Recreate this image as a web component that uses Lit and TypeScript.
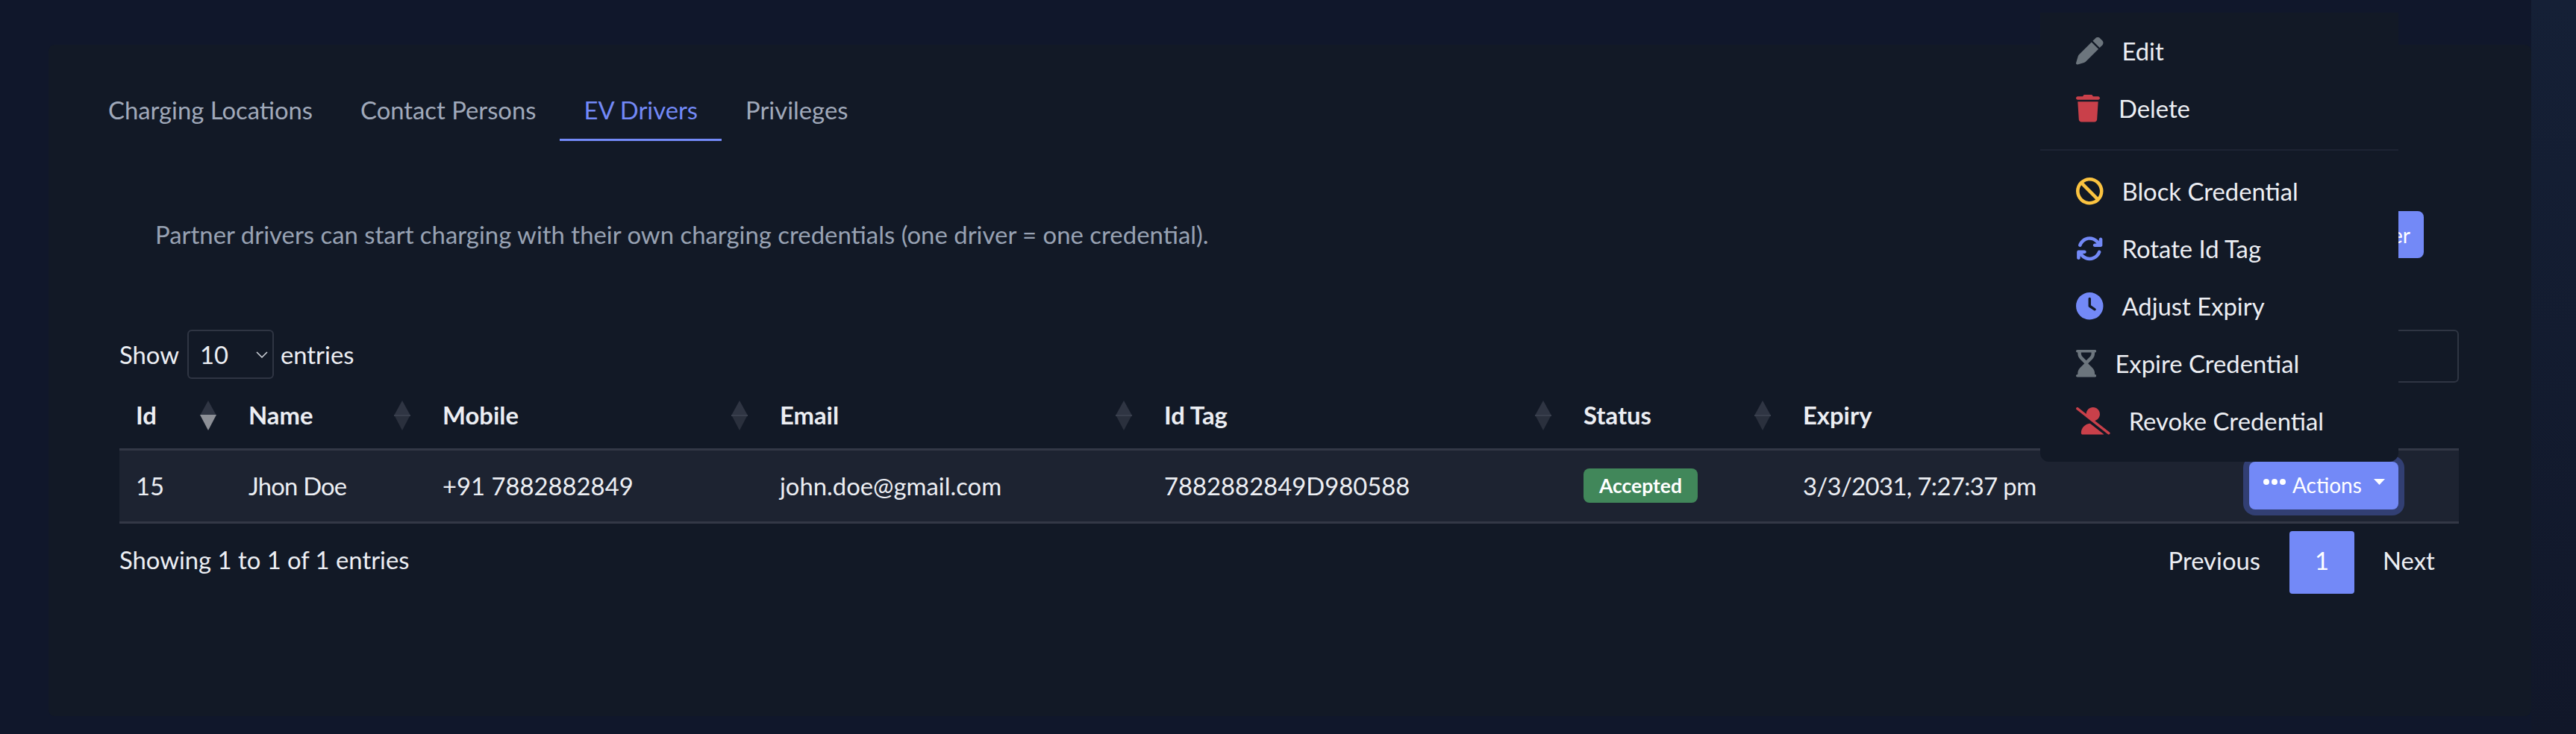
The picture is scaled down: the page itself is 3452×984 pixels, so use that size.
import { LitElement, html, css, svg } from "lit";
import { customElement } from "lit/decorators.js";

const PEN = "M362.7 19.3L314.3 67.7 444.3 197.7l48.4-48.4c25-25 25-65.5 0-90.5L453.3 19.3c-25-25-65.5-25-90.5 0zm-71 71L58.6 323.5c-10.4 10.4-18 23.3-22.2 37.4L1 481.2C-1.5 489.7 .8 498.8 7 505s15.3 8.5 23.7 6.1l120.3-35.4c14.1-4.2 27-11.8 37.4-22.2L421.7 220.3 291.7 90.3z";
const TRASH = "M135.2 17.7L128 32H32C14.3 32 0 46.3 0 64S14.3 96 32 96H416c17.7 0 32-14.3 32-32s-14.3-32-32-32H320l-7.2-14.3C307.4 6.8 296.3 0 284.2 0H163.8c-12.1 0-23.2 6.8-28.6 17.7zM416 128H32L53.2 467c1.6 25.3 22.6 45 47.9 45H346.9c25.3 0 46.3-19.7 47.9-45L416 128z";
const BAN = "M367.2 412.5L99.5 144.8C77.1 176.1 64 214.5 64 256c0 106 86 192 192 192c41.5 0 79.9-13.1 111.2-35.5zm45.3-45.3C434.9 335.9 448 297.5 448 256c0-106-86-192-192-192c-41.5 0-79.9 13.1-111.2 35.5L412.5 367.2zM0 256a256 256 0 1 1 512 0A256 256 0 1 1 0 256z";
const SYNC = "M105.1 202.6c7.7-21.8 20.2-42.3 37.8-59.8c62.5-62.5 163.8-62.5 226.3 0L386.3 160H352c-17.7 0-32 14.3-32 32s14.3 32 32 32H463.5c0 0 0 0 0 0h.4c17.7 0 32-14.3 32-32V80c0-17.7-14.3-32-32-32s-32 14.3-32 32v35.2L414.4 97.6c-87.5-87.5-229.3-87.5-316.8 0C73.2 122 55.6 150.7 44.8 181.4c-5.9 16.7 2.9 34.9 19.5 40.8s34.9-2.9 40.8-19.5zM39 289.3c-5 1.5-9.8 4.2-13.7 8.2c-4 4-6.7 8.8-8.1 14c-.3 1.2-.6 2.5-.8 3.8c-.3 1.7-.4 3.4-.4 5.1V432c0 17.7 14.3 32 32 32s32-14.3 32-32V396.9l17.6 17.5 0 0c87.5 87.4 229.3 87.4 316.7 0c24.4-24.4 42.1-53.1 52.9-83.7c5.9-16.7-2.9-34.9-19.5-40.8s-34.9 2.9-40.8 19.5c-7.7 21.8-20.2 42.3-37.8 59.8c-62.5 62.5-163.8 62.5-226.3 0l-.1-.1L125.6 352H160c17.7 0 32-14.3 32-32s-14.3-32-32-32H48.4c-1.6 0-3.2 .1-4.8 .3s-3.1 .5-4.6 1z";
const CLOCK = "M256 0a256 256 0 1 1 0 512A256 256 0 1 1 256 0zM232 120V256c0 8 4 15.5 10.7 20l96 64c11 7.4 25.9 4.4 33.3-6.7s4.4-25.9-6.7-33.3L280 243.2V120c0-13.3-10.7-24-24-24s-24 10.7-24 24z";
const HOURGLASS = "M0 24C0 10.7 10.7 0 24 0H360c13.3 0 24 10.7 24 24s-10.7 24-24 24h-8V67c0 40-16 79-44.500 107.500L226 256l81.500 81.500C336 366 352 405 352 445v19h8c13.300 0 24 10.700 24 24s-10.700 24-24 24H24c-13.300 0-24-10.700-24-24s10.700-24 24-24h8V445c0-40 16-79 44.500-107.500L158 256 76.500 174.500C48 146 32 107 32 67V48H24C10.700 48 0 37.300 0 24zM96 48V67c0 23 9 45 26 62l70 70 70-70c17-17 26-39 26-62V48z";
const USER_SLASH = "M38.800 5.100C28.400-3.100 13.300-1.200 5.100 9.200S-1.200 34.700 9.200 42.900l592 464c10.400 8.200 25.500 6.300 33.700-4.100s6.300-25.500-4.100-33.700L353.300 251.600C407.900 237 448 187.200 448 128C448 57.300 390.700 0 320 0C250.200 0 193.500 55.800 192 125.200L38.800 5.100zM264.300 304.300C170.500 309.400 96 387.200 96 482.300c0 16.400 13.300 29.700 29.700 29.700H514.300c3.900 0 7.600-.7 11-2.100l-261-205.600z";

const icon = (d: string, w: number, color: string, vb = 512) =>
  html`<svg class="ico" style="width:${(w / 512) * 36.5}px;color:${color}" viewBox="0 0 ${w} ${vb}"><path fill="currentColor" fill-rule="evenodd" d=${d}></path></svg>`;

const COLS = [
  { t: "Id", w: 151, v: "15", active: true },
  { t: "Name", w: 260, v: "Jhon Doe", c: "name" },
  { t: "Mobile", w: 452, v: "+91 7882882849" },
  { t: "Email", w: 515, v: "john.doe@gmail.com" },
  { t: "Id Tag", w: 562, v: "7882882849D980588" },
  { t: "Status", w: 294, v: "" },
  { t: "Expiry", w: 596, v: "3/3/2031, 7:27:37 pm", nosort: true },
  { t: "", w: 305, v: "", nosort: true },
];

@customElement("app-root")
export class AppRoot extends LitElement {
  static styles = css`
    :host { display: block; height: 984px; overflow: hidden; background: linear-gradient(180deg, #152036, #111729) right top / 60px 100% no-repeat, #10172b; font-family: "Lato", "Noto Sans", sans-serif; font-size: 32.8px; color: #eceef3; }
    * { box-sizing: border-box; }
    .page { padding: 60px 60px 0 65px; }
    .card { height: 900px; background: #121926; padding: 66px 97px 0 95px; border-radius: 8px; }
    .tabs { display: flex; margin-left: -47px; }
    .tab { padding: 0 32px 16px; line-height: 44px; height: 63px; color: #a0a9ba; border-bottom: 3px solid transparent; }
    .tab.on { color: #7389f7; border-bottom-color: #7389f7; }
    .notice { display: flex; justify-content: space-between; align-items: center; margin: 94px 47px 0 48px; height: 63px; }
    .notice p { margin: 0 0 1px; font-size: 32.9px; color: #98a2b3; }
    .add { height: 63px; padding: 0 18px 0 40px; display: flex; align-items: center; background: #7389f7; color: #fff; border-radius: 8px; font-size: 28px; }
    .ctl { display: flex; justify-content: space-between; align-items: flex-start; margin-top: 96px; height: 71px; }
    .len { display: flex; align-items: center; gap: 9px; height: 66px; }
    .sel { width: 116px; height: 66px; margin-left: 2px; border: 2px solid #2f3543; border-radius: 6px; display: flex; align-items: center; justify-content: space-between; padding: 0 6px 0 15px; }
    .sel svg { width: 16px; height: 9px; }
    .search { width: 320px; height: 71px; border: 2px solid #2f3543; border-radius: 6px; }
    table { width: 3135px; table-layout: fixed; border-collapse: collapse; }
    th { height: 89px; padding: 0 21px 0 22px; font-weight: 700; text-align: left; }
    .th { display: flex; justify-content: space-between; align-items: center; }
    .sort { width: 22px; height: 40px; flex: none; }
    td { padding: 0 0 0 22px; height: 98px; background: #1d2331; border-top: 3px solid #333846; border-bottom: 3px solid #333846; box-shadow: 0 2px 0 #0e131f; }
    td.name { letter-spacing: -0.8px; }
    td.expiry { letter-spacing: -0.62px; }
    .badge { display: inline-flex; align-items: center; justify-content: center; width: 153px; height: 46px; background: #41875a; border-radius: 8px; color: #fff; font-weight: 700; font-size: 26.5px; }
    .wrap { position: relative; width: 200px; margin-left: 2px; }
    .btn { height: 64px; background: #7389f7; border-radius: 8px; box-shadow: 0 0 0 8px #323f73; color: #fff; display: flex; align-items: center; padding: 0 0 2px 19px; font-size: 28px; gap: 9px; }
    .dots { width: 30px; height: 8px; margin-top: -8px; }
    .caret { width: 15px; height: 8px; margin-left: 7px; margin-top: -8px; }
    .menu { position: absolute; right: 0; bottom: 100%; width: 480px; height: 602px; background: #121926; border-radius: 0 0 12px 12px; padding: 13px 0 16px; z-index: 5; }
    .item { display: flex; align-items: center; gap: 25px; height: 77px; padding-left: 48px; }
    .ico { height: 36.5px; flex: none; }
    hr { height: 2px; margin: 16px 0; border: 0; background: #1d2333; }
    .foot { display: flex; justify-content: space-between; margin-top: 10px; }
    .info { padding-top: 17px; line-height: 44px; }
    .pg { display: flex; height: 84px; align-items: center; }
    .prev { width: 199px; text-align: right; padding-right: 39px; padding-bottom: 5px; }
    .cur { width: 87px; height: 84px; background: #7389f7; color: #fff; border-radius: 4px; display: flex; align-items: center; justify-content: center; padding-bottom: 5px; }
    .next { width: 140px; padding-left: 38px; padding-bottom: 5px; }
  `;

  private sortIcon(active?: boolean) {
    return html`<svg class="sort" viewBox="0 0 22 40">
      ${svg`<path d="M11 0L22 20H0Z" fill="#2f3543"></path>
      <path d="M0 19H22L11 40Z" fill=${active ? "#8d9097" : "#2a303d"}></path>
      ${active ? "" : svg`<rect x="0" y="19" width="22" height="2" fill="#3a404e"></rect>`}`}
    </svg>`;
  }

  render() {
    return html`<div class="page"><div class="card">
      <div class="tabs">
        <div class="tab">Charging Locations</div>
        <div class="tab">Contact Persons</div>
        <div class="tab on">EV Drivers</div>
        <div class="tab">Privileges</div>
      </div>
      <div class="notice">
        <p>Partner drivers can start charging with their own charging credentials (one driver = one credential).</p>
        <div class="add">Add Driver</div>
      </div>
      <div class="ctl">
        <div class="len">Show
          <div class="sel"><span>10</span><svg viewBox="0 0 16 9"><path d="M1 1l7 7 7-7" fill="none" stroke="#cfd3da" stroke-width="1.5"></path></svg></div>
          entries</div>
        <div class="search"></div>
      </div>
      <table>
        <colgroup>${COLS.map((c) => html`<col style="width:${c.w}px" />`)}</colgroup>
        <thead><tr>${COLS.map((c) => html`<th><div class="th"><span>${c.t}</span>${c.t && !c.nosort ? this.sortIcon(c.active) : ""}</div></th>`)}</tr></thead>
        <tbody><tr>
          ${COLS.slice(0, 5).map((c) => html`<td class=${c.c ?? ""}>${c.v}</td>`)}
          <td><span class="badge">Accepted</span></td>
          <td class="expiry">${COLS[6].v}</td>
          <td>
            <div class="wrap">
              <div class="menu">
                <div class="item">${icon(PEN, 512, "#6c757d")}Edit</div>
                <div class="item">${icon(TRASH, 448, "#c9404a")}Delete</div>
                <hr />
                <div class="item">${icon(BAN, 512, "#fbc340")}Block Credential</div>
                <div class="item">${icon(SYNC, 512, "#7389f7")}Rotate Id Tag</div>
                <div class="item">${icon(CLOCK, 512, "#7389f7")}Adjust Expiry</div>
                <div class="item">${icon(HOURGLASS, 384, "#6c757d")}Expire Credential</div>
                <div class="item">${icon(USER_SLASH, 640, "#c9404a")}Revoke Credential</div>
              </div>
              <div class="btn">
                <svg class="dots" viewBox="0 0 30 8"><circle cx="4" cy="4" r="4" fill="#fff"></circle><circle cx="15" cy="4" r="4" fill="#fff"></circle><circle cx="26" cy="4" r="4" fill="#fff"></circle></svg>
                Actions
                <svg class="caret" viewBox="0 0 15 8"><path d="M0 0H15L7.5 8Z" fill="#fff"></path></svg>
              </div>
            </div>
          </td>
        </tr></tbody>
      </table>
      <div class="foot">
        <div class="info">Showing 1 to 1 of 1 entries</div>
        <div class="pg"><div class="prev">Previous</div><div class="cur">1</div><div class="next">Next</div></div>
      </div>
    </div></div>`;
  }
}
